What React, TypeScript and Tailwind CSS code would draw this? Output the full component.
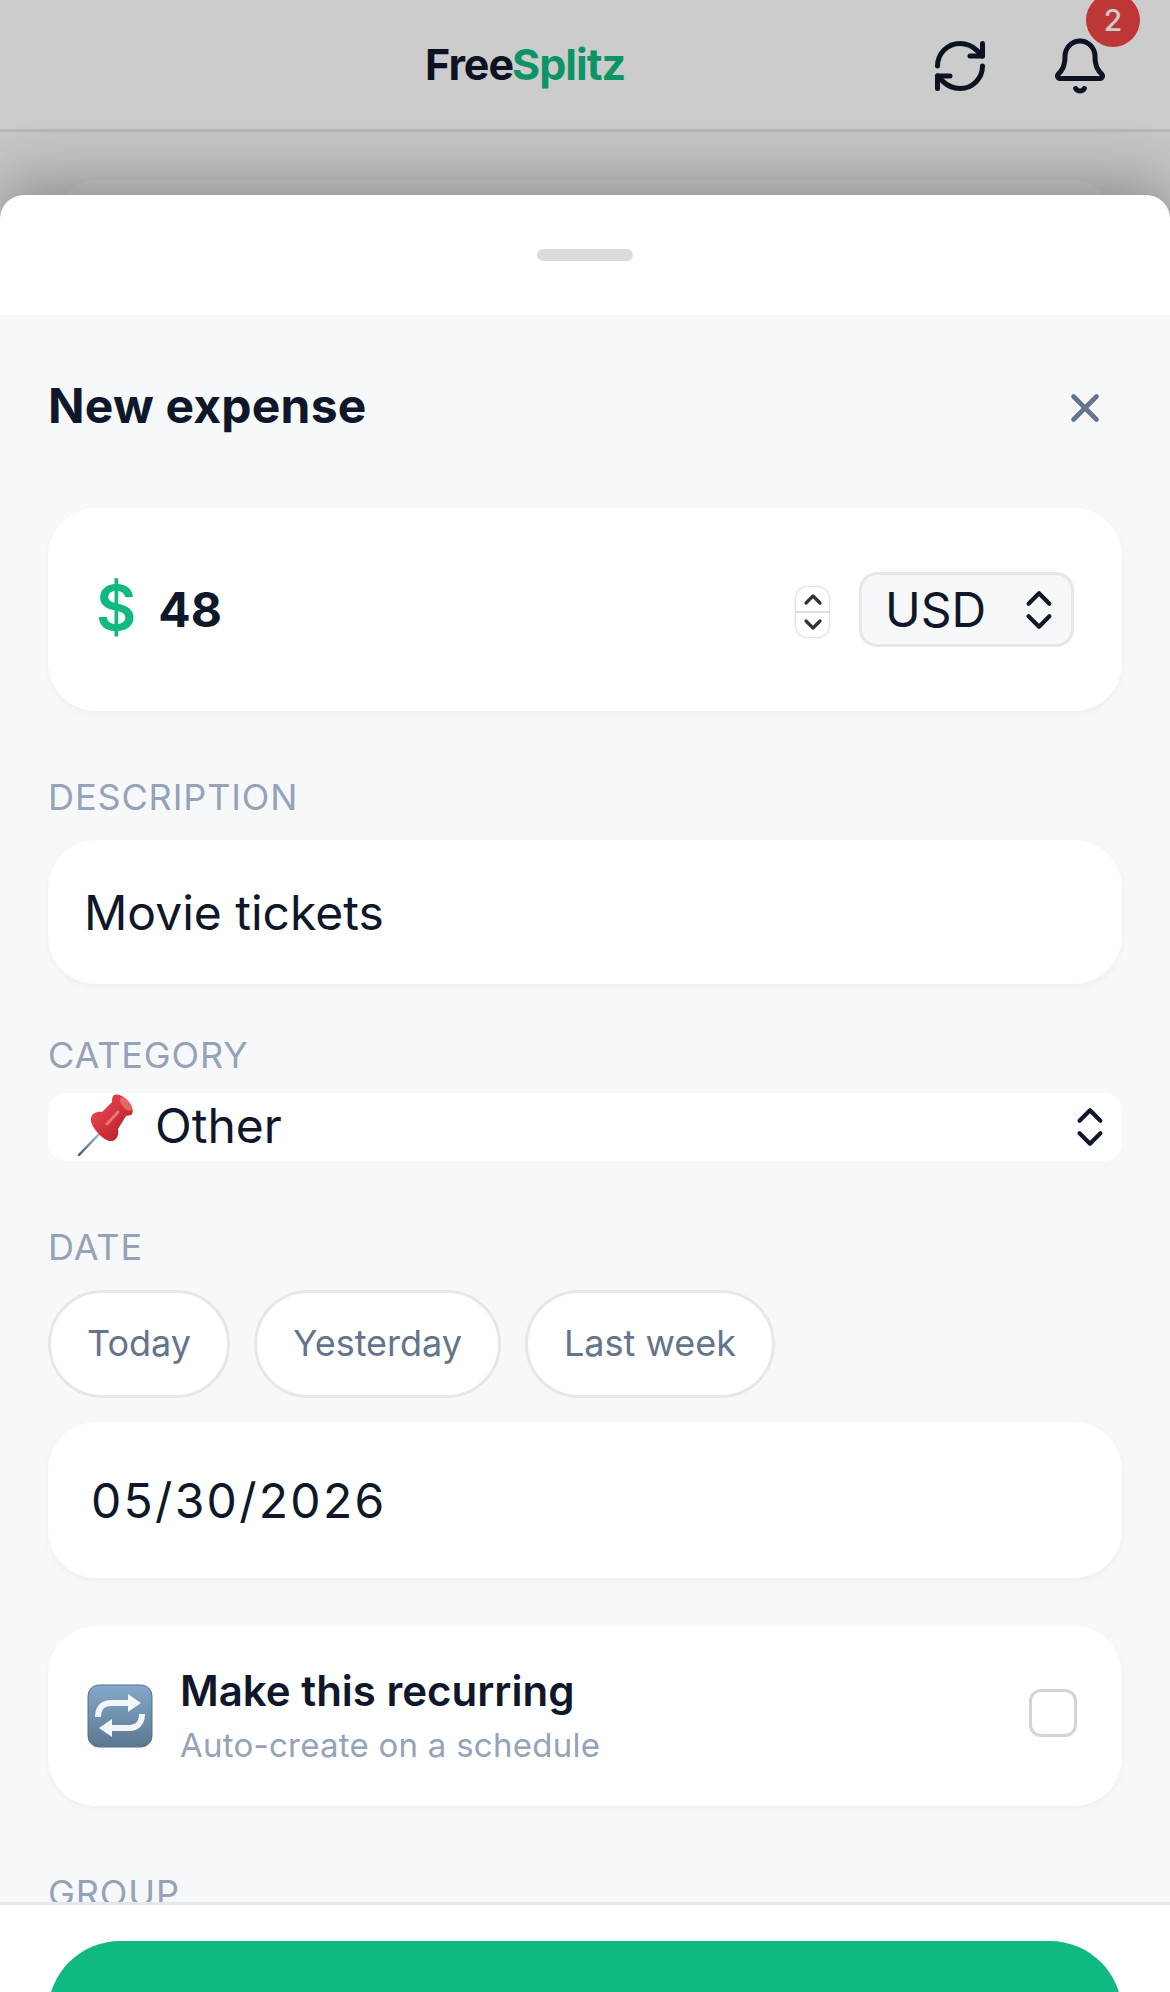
import React from 'react';
import { Bell, ChevronsUpDown, RefreshCw, X } from 'lucide-react';

const Label = ({ children }: { children: React.ReactNode }) => (
  <div className="text-[36px] leading-[54px] tracking-[0.9px] text-[#94a3b8] uppercase">{children}</div>
);

const PinEmoji = () => (
  <svg width="62" height="62" viewBox="0 0 62 62" className="ml-px -mt-[5px] mr-[-2px] shrink-0">
    <defs>
      <linearGradient id="pinRed" x1="0" y1="0" x2="1" y2="1">
        <stop offset="0" stopColor="#f0525a" />
        <stop offset="1" stopColor="#b3161f" />
      </linearGradient>
      <linearGradient id="pinNeedle" x1="0" y1="1" x2="1" y2="0">
        <stop offset="0" stopColor="#4b5563" />
        <stop offset="1" stopColor="#a8cdf0" />
      </linearGradient>
    </defs>
    <path d="M2 61 L25 37" stroke="url(#pinNeedle)" strokeWidth="2.5" strokeLinecap="round" />
    <path d="M14 24c-2 7 12 24 21 23 5-1 7-6 6-12l8-13 5-1c3-2 2-9-3-14-5-6-12-8-15-5-1 2-1 4-1 6L25 18c-5-1-10 1-11 6z" fill="url(#pinRed)" />
    <ellipse cx="49" cy="10" rx="4" ry="8" transform="rotate(-40 49 10)" fill="#f47a80" opacity="0.7" />
    <path d="M30 30l11-12" stroke="#f7a0a4" strokeWidth="3" strokeLinecap="round" opacity="0.6" />
  </svg>
);

const RepeatEmoji = () => (
  <svg width="66" height="64" viewBox="0 0 66 64" className="shrink-0">
    <defs>
      <linearGradient id="repeatBlue" x1="0" y1="0" x2="0" y2="1">
        <stop offset="0" stopColor="#84a9cb" />
        <stop offset="1" stopColor="#5b7791" />
      </linearGradient>
    </defs>
    <rect x="1" y="1" width="64" height="62" rx="11" fill="url(#repeatBlue)" stroke="#56718a" strokeWidth="1" />
    <path d="M11 33c0-9 5-14 13-14h19" fill="none" stroke="#f3f6f9" strokeWidth="6" />
    <path d="M41 10l13 9-13 9z" fill="#f3f6f9" />
    <path d="M55 30c0 9-5 14-13 14H23" fill="none" stroke="#f3f6f9" strokeWidth="6" />
    <path d="M25 35l-13 9 13 9z" fill="#f3f6f9" />
  </svg>
);

const NumberSpinner = () => (
  <div className="mt-[4px] flex h-[50px] w-[33px] flex-col rounded-[12px] bg-white shadow-[0_0_3px_rgba(0,0,0,0.3)]">
    <div className="flex flex-1 items-center justify-center border-b-2 border-[#dddddd]">
      <svg width="20" height="14" viewBox="0 0 20 14">
        <path d="M3 11l7-7 7 7" fill="none" stroke="#333333" strokeWidth="3.2" strokeLinecap="round" strokeLinejoin="round" />
      </svg>
    </div>
    <div className="flex flex-1 items-center justify-center">
      <svg width="20" height="14" viewBox="0 0 20 14">
        <path d="M3 3l7 7 7-7" fill="none" stroke="#333333" strokeWidth="3.2" strokeLinecap="round" strokeLinejoin="round" />
      </svg>
    </div>
  </div>
);

const App: React.FC = () => {
  return (
    <div className="relative h-[1992px] w-[1170px] overflow-hidden bg-[#f7f8fa] font-['Inter',sans-serif] text-[#0f172a]">
      {/* Page behind the sheet */}
      <header className="relative flex h-[132px] items-center border-b-[3px] border-[#e5e7eb] bg-white pl-[425px]">
        <div className="text-[43px] font-bold leading-none tracking-[-1px]">
          Free<span className="text-[#10b981] -ml-px">Splitz</span>
        </div>
        <div className="absolute right-[60px] top-[36px] flex items-center gap-[60px]">
          <RefreshCw size={60} strokeWidth={2} />
          <div className="relative">
            <Bell size={60} strokeWidth={2} />
            <span className="absolute -right-[30px] -top-[43px] flex h-[54px] w-[54px] items-center justify-center rounded-full bg-[#ef4444] text-[30px] font-medium text-white">
              2
            </span>
          </div>
        </div>
      </header>
      <div className="mx-[60px] mt-[48px] h-[200px] rounded-[36px] bg-white" />
      <div className="absolute inset-0 bg-black/20" />

      {/* Bottom sheet */}
      <div className="absolute inset-x-0 bottom-0 top-[195px] flex flex-col overflow-hidden rounded-t-[24px] bg-white shadow-[0_-12px_60px_rgba(0,0,0,0.3)]">
        <div className="flex h-[120px] shrink-0 justify-center pt-[54px]">
          <div className="h-[12px] w-[96px] rounded-full bg-[#dcdcdc]" />
        </div>

        <div className="min-h-0 flex-1 overflow-hidden bg-[#f7f8fa] px-[48px]">
          <div className="mt-[45px] flex h-[92px] items-center justify-between">
            <h2 className="text-[48px] font-bold leading-none tracking-[0.2px]">New expense</h2>
            <X size={46} strokeWidth={2.4} className="mr-[14px] mt-[3px] text-[#64748b]" />
          </div>

          <div className="mt-[56px] flex h-[203px] items-center rounded-[48px] bg-white pl-[48px] pr-[48px] shadow-[0_3px_6px_rgba(0,0,0,0.04)]">
            <span className="-mt-[3px] text-[62px] font-semibold leading-none text-[#10b981]">$</span>
            <span className="ml-[22px] flex-1 text-[48px] font-bold leading-none">48</span>
            <NumberSpinner />
            <div className="ml-[30px] flex h-[75px] w-[215px] items-center rounded-[18px] border-[3px] border-[#e5e7eb] bg-[#f7f8fa] pl-[23px] pr-[7px]">
              <span className="flex-1 text-[48px] leading-none">USD</span>
              <ChevronsUpDown size={50} strokeWidth={2} />
            </div>
          </div>

          <div className="mt-[59px]">
            <Label>DESCRIPTION</Label>
          </div>
          <div className="mt-[16px] flex h-[144px] items-center rounded-[48px] bg-white px-[36px] pt-[2px] text-[48px] shadow-[0_3px_6px_rgba(0,0,0,0.04)]">
            Movie tickets
          </div>

          <div className="mt-[44px]">
            <Label>CATEGORY</Label>
          </div>
          <div className="mt-[11px] flex h-[68px] items-center rounded-[18px] bg-white pl-[28px] pr-[7px]">
            <PinEmoji />
            <span className="-mt-[2px] ml-[18px] flex-1 text-[48px] leading-none">Other</span>
            <ChevronsUpDown size={50} strokeWidth={2} />
          </div>

          <div className="mt-[59px]">
            <Label>DATE</Label>
          </div>
          <div className="mt-[16px] flex gap-[24px]">
            {['Today', 'Yesterday', 'Last week'].map(chip => (
              <div
                key={chip}
                className="flex h-[108px] items-center rounded-full border-[3px] border-[#e5e7eb] bg-white px-[36px] pb-[2px] text-[36px] text-[#64748b]"
              >
                {chip}
              </div>
            ))}
          </div>
          <div className="mt-[24px] flex h-[156px] items-center rounded-[48px] bg-white px-[43px] pt-[2px] text-[48px] tracking-[2.3px] shadow-[0_3px_6px_rgba(0,0,0,0.04)]">
            05/30/2026
          </div>

          <div className="mt-[48px] flex h-[180px] items-center rounded-[48px] bg-white pl-[39px] pr-[45px] shadow-[0_3px_6px_rgba(0,0,0,0.04)]">
            <RepeatEmoji />
            <div className="ml-[27px] flex-1">
              <div className="text-[42px] font-semibold leading-[54px]">Make this recurring</div>
              <div className="mt-[3px] text-[33px] leading-[48px] tracking-[0.25px] text-[#94a3b8]">Auto-create on a schedule</div>
            </div>
            <div className="-mt-[6px] h-[48px] w-[48px] rounded-[12px] border-[3px] border-[#d1d5db] bg-white" />
          </div>

          <div className="mt-[60px]">
            <Label>GROUP</Label>
          </div>
        </div>

        <div className="h-[90px] shrink-0 border-t-[3px] border-[#e5e7eb] bg-white px-[48px] pt-[36px]">
          <div className="h-[160px] rounded-[72px] bg-[#10b981]" />
        </div>
      </div>
    </div>
  );
};

export default App;
